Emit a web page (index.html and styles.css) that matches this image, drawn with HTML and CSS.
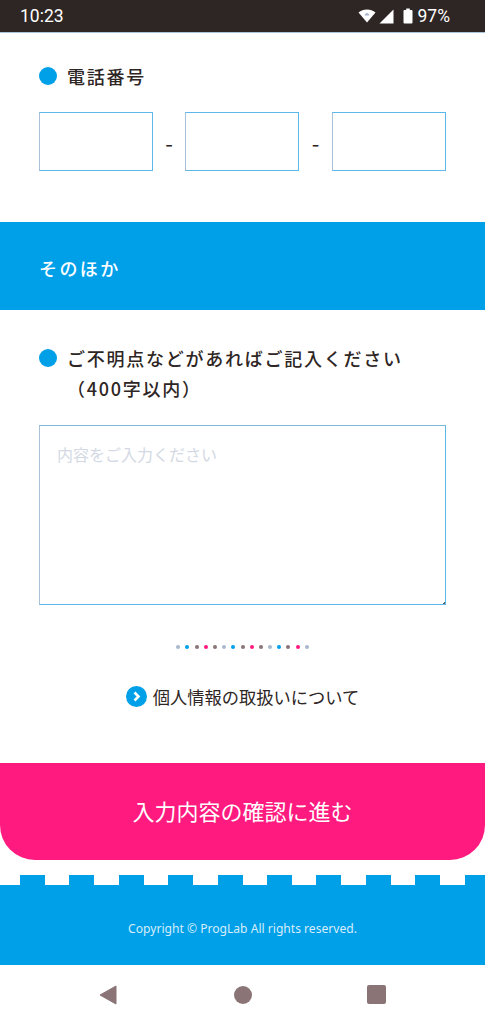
FILE: index.html
```html
<!DOCTYPE html>
<html lang="ja">
<head>
<meta charset="utf-8">
<title>お問い合わせ</title>
<link rel="stylesheet" href="styles.css">
</head>
<body>
<header class="status">
  <span class="time">10:23</span>
  <div class="status-right">
    <svg class="wifi" width="18" height="14" viewBox="0 0 18 14"><path d="M0.5 3.6C2.8 1.6 5.8 0.5 9 0.5s6.200 1.100 8.500 3.100L9 13.500z" fill="#fff"/><path d="M6.500 6.500C7 5 8 4 9 4s2 1 2.500 2.500z" fill="#a9b6cc"/></svg>
    <svg class="signal" width="15" height="15" viewBox="0 0 15 15"><path d="M14.500 0.500V14.500H0.500z" fill="#fff"/></svg>
    <svg class="battery" width="10" height="16" viewBox="0 0 10 16"><path d="M3.200 0.500h3.600v1.500h1.700a1 1 0 0 1 1 1v11.500a1 1 0 0 1-1 1h-7a1 1 0 0 1-1-1V3a1 1 0 0 1 1-1h1.700z" fill="#fff"/></svg>
    <span class="pct">97%</span>
  </div>
</header>

<main>
  <section class="phone">
    <h2 class="label"><span class="bullet"></span><span>電話番号</span></h2>
    <div class="phone-row">
      <input class="field" type="text">
      <span class="dash">-</span>
      <input class="field" type="text">
      <span class="dash">-</span>
      <input class="field" type="text">
    </div>
  </section>

  <h1 class="band">そのほか</h1>

  <section class="other">
    <h2 class="label"><span class="bullet"></span><span>ご不明点などがあればご記入ください<br><span class="sub">（400字以内）</span></span></h2>
    <textarea class="message" placeholder="内容をご入力ください"></textarea>
  </section>

  <div class="dots">
    <i class="g"></i><i class="b"></i><i class="r"></i><i class="p"></i><i class="r"></i><i class="g"></i><i class="b"></i><i class="r"></i><i class="p"></i><i class="r"></i><i class="g"></i><i class="b"></i><i class="r"></i><i class="p"></i><i class="g"></i>
  </div>

  <a class="privacy" href="#">
    <svg width="21" height="21" viewBox="0 0 21 21"><circle cx="10.500" cy="10.500" r="10.500" fill="#00a0e9"/><path d="M8.500 6.500l4 4-4 4" fill="none" stroke="#fff" stroke-width="2.600"/></svg>
    <span>個人情報の取扱いについて</span>
  </a>

  <button class="submit" type="button">入力内容の確認に進む</button>
</main>

<footer class="footer">
  <div class="teeth"></div>
  <p class="copy">Copyright © ProgLab All rights reserved.</p>
</footer>

<nav class="navbar">
  <svg width="18" height="20" viewBox="0 0 18 20"><path d="M17 1V19L1 10z" fill="#8a7476" stroke="#8a7476" stroke-linejoin="round"/></svg>
  <svg class="home" width="18" height="18" viewBox="0 0 18 18"><circle cx="9" cy="9" r="9" fill="#8a7476"/></svg>
  <svg width="19" height="19" viewBox="0 0 19 19"><rect width="19" height="19" rx="2" fill="#8a7476"/></svg>
</nav>
</body>
</html>
```

FILE: styles.css
```css
* { box-sizing: border-box; }
html, body { margin: 0; padding: 0; }
body {
  width: 485px;
  height: 1024px;
  overflow: hidden;
  background: #fff;
  color: #2e2624;
  font-family: "Noto Sans CJK JP", "Noto Sans", sans-serif;
}
.status {
  height: 33px;
  background: #2e2624;
  border-bottom: 1px solid #a9c4dc;
  color: #fff;
  display: flex;
  justify-content: space-between;
  align-items: center;
  padding: 0 35px 0 20px;
  font-family: Roboto, sans-serif;
  font-size: 17.500px;
}
.status-right { display: flex; align-items: center; }
.wifi { margin-right: 3px; }
.signal { margin-right: 9px; }
.battery { margin-right: 5px; }

.phone { padding: 28px 39px 0; height: 189px; }
.label {
  margin: 0;
  display: flex;
  gap: 10px;
  font-size: 18px;
  font-weight: 500;
  line-height: 30px;
  letter-spacing: 1.750px;
}
.bullet {
  flex: none;
  width: 18px;
  height: 18px;
  margin-top: 6px;
  border-radius: 50%;
  background: #00a0e9;
}
.phone-row {
  margin-top: 21px;
  display: grid;
  grid-template-columns: 114px 32px 114px 33px 114px;
  align-items: center;
}
.field {
  width: 114px;
  height: 59px;
  border: 1px solid #5cb8ea;
  border-left-color: #a9c0d8;
  background: #fff;
  padding: 0;
}
.dash { font-size: 22px; line-height: 1; text-align: center; }

.band {
  margin: 0;
  height: 88px;
  background: #00a0e9;
  color: #fff;
  display: flex;
  align-items: center;
  padding: 3px 39px 0;
  font-size: 18px;
  font-weight: 500;
  letter-spacing: 2.400px;
}

.other { padding: 33px 39px 0; }
.message {
  display: block;
  width: 407px;
  height: 180px;
  margin-top: 22px;
  padding: 15px 17px;
  border: 1px solid #5cb8ea;
  border-left-color: #a9c0d8;
  border-top-color: #7db8da;
  background: linear-gradient(135deg, transparent 50%, #55606a 50%) no-repeat right 0 bottom 0 / 3px 3px, #fff;
  resize: none;
  font-family: "Noto Sans CJK JP", sans-serif;
  font-size: 16px;
  line-height: 26px;
}
.message::placeholder { color: #d3d9e4; opacity: 1; }

.dots {
  margin-top: 40px;
  height: 4px;
  display: flex;
  justify-content: center;
  gap: 5.200px;
}
.dots i { width: 4px; height: 4px; border-radius: 50%; }
.dots .g { background: #a9b9d0; }
.dots .b { background: #00a0e9; }
.dots .r { background: #8a7476; }
.dots .p { background: #ff1a7f; }

.privacy {
  margin-top: 27px;
  display: flex;
  justify-content: center;
  align-items: center;
  gap: 6px;
  height: 40px;
  color: #2e2624;
  text-decoration: none;
  font-size: 17.250px;
}

.submit {
  display: block;
  width: 100%;
  height: 97px;
  margin-top: 47px;
  border: 0;
  border-radius: 0 0 35px 35px;
  background: #ff1a7f;
  color: #fff;
  font-family: "Noto Sans CJK JP", sans-serif;
  font-size: 22px;
  padding: 0 0 3px;
}

.footer { margin-top: 15px; }
.teeth {
  height: 10px;
  margin-left: 20px;
  background: repeating-linear-gradient(90deg, #00a0e9 0, #00a0e9 25px, transparent 25px, transparent 49.400px);
}
.copy {
  margin: 0;
  height: 80px;
  background: #00a0e9;
  color: #d8ecfa;
  display: flex;
  align-items: center;
  justify-content: center;
  padding-top: 6px;
  font-family: "Noto Sans", sans-serif;
  font-size: 12.100px;
}

.navbar {
  height: 59px;
  background: #fff;
  display: flex;
  align-items: center;
  justify-content: space-between;
  padding: 0 99px;
}
.home { margin-left: 2px; }
```
